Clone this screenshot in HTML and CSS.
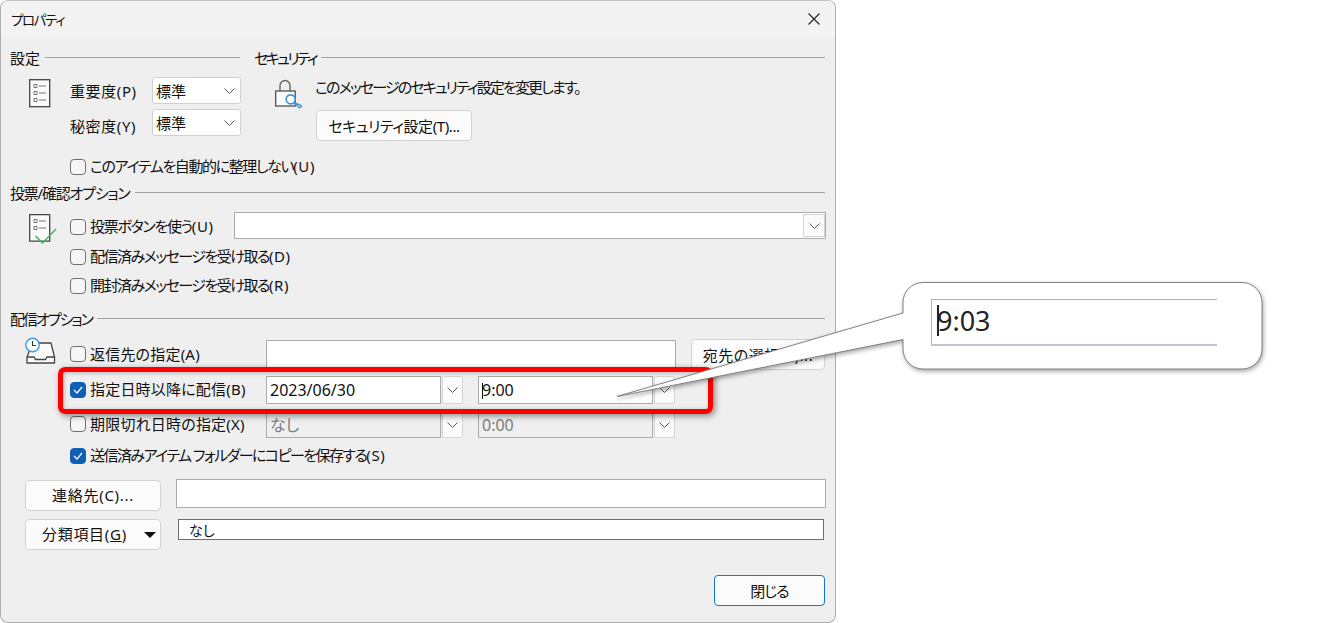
FILE: index.html
```html
<!DOCTYPE html>
<html lang="ja">
<head>
<meta charset="utf-8">
<title>プロパティ</title>
<link rel="stylesheet" href="styles.css">
</head>
<body>
<div class="dialog">
  <div class="titlebar">
    <span class="title-text">プロパティ</span>
    <svg class="close-x" width="12" height="12" viewBox="0 0 12 12"><path d="M.5.5l11 11M11.5.5l-11 11" stroke="#222" stroke-width="1.1" fill="none"/></svg>
  </div>
  <div class="content">
    <div class="top-grid">
      <section>
        <div class="sec-head"><span>設定</span><i class="rule"></i></div>
        <div class="pri">
          <svg class="icon-list" width="22" height="29" viewBox="0 0 22 29"><rect x=".7" y=".7" width="20" height="27" fill="#fafafa" stroke="#444" stroke-width="1.3"/><path d="M5 5.500h3v3H5zM5 12.500h3v3H5zM5 19.500h3v3H5z" fill="none" stroke="#777"/><path d="M10 7h7M10 14h7M10 21h7" stroke="#777"/></svg>
          <div class="pri-fields">
            <div class="pri-row"><span class="pri-label">重要度(P)</span><div class="select"><span>標準</span><svg width="11" height="6" viewBox="0 0 11 6"><path d="M.5.5l5 5 5-5" fill="none" stroke="#555"/></svg></div></div>
            <div class="pri-row second"><span class="pri-label low">秘密度(Y)</span><div class="select"><span>標準</span><svg width="11" height="6" viewBox="0 0 11 6"><path d="M.5.5l5 5 5-5" fill="none" stroke="#555"/></svg></div></div>
          </div>
        </div>
      </section>
      <section>
        <div class="sec-head"><span class="tight-security">セキュリティ</span><i class="rule"></i></div>
        <div class="sec-body">
          <svg class="icon-lock" width="28" height="30" viewBox="0 0 28 30"><path d="M5 12V6.500a5 5 0 0 1 10 0V12" fill="none" stroke="#666" stroke-width="1.400"/><rect x=".7" y="12" width="19.500" height="15" fill="#fafafa" stroke="#444" stroke-width="1.200"/><path d="M19 23.500l5.500 5.500 2-1.500-1-1.500-1 .5-1-1.500-1 .5-1.500-1.500z" fill="#fff" stroke="#3d92d0" stroke-width="1.300"/><circle cx="15.700" cy="20.300" r="4.500" fill="#fff" stroke="#3d92d0" stroke-width="1.700"/></svg>
          <div>
            <div class="sec-text">このメッセージのセキュリティ設定を変更します。</div>
            <div class="btn btn-security"><span>セキュリティ設定(T)...</span></div>
          </div>
        </div>
      </section>
    </div>

    <label class="check-row row-keep"><i class="check"></i><span class="tight-keep">このアイテムを自動的に整理しない<span class="key">(U)</span></span></label>

    <div class="sec-head head-vote"><span class="tight-vote">投票/確認オプション</span><i class="rule"></i></div>
    <div class="group">
      <svg class="icon-vote" width="28" height="31" viewBox="0 0 28 31"><path d="M.7.7h20v26.500H.7z" fill="#fafafa" stroke="#444" stroke-width="1.300"/><path d="M5 5.500h3v3H5zM5 12.500h3v3H5z" fill="none" stroke="#777"/><path d="M10 7h7M10 14h7" stroke="#777"/><path d="M6.500 22l7 7 13.500-14" fill="none" stroke="#4caf6a" stroke-width="1.500"/></svg>
      <div class="group-rows">
        <div class="vote-row">
          <label class="check-row vote-check"><i class="check"></i><span class="tight-vote-label">投票ボタンを使う<span class="key">(U)</span></span></label>
          <div class="input vote-input"><div class="mini-drop"><svg width="11" height="6" viewBox="0 0 11 6"><path d="M.5.5l5 5 5-5" fill="none" stroke="#555"/></svg></div></div>
        </div>
        <label class="check-row row-delivered"><i class="check"></i><span class="tight-receipt">配信済みメッセージを受け取る<span class="key">(D)</span></span></label>
        <label class="check-row row-read"><i class="check"></i><span class="tight-receipt">開封済みメッセージを受け取る<span class="key">(R)</span></span></label>
      </div>
    </div>

    <div class="sec-head head-delivery"><span class="tight-delivery">配信オプション</span><i class="rule"></i></div>
    <div class="group">
      <svg class="icon-tray" width="32" height="30" viewBox="0 0 32 30"><path d="M10 6h16l3.500 14v6H2v-6L7 7" fill="#fafafa" stroke="#444" stroke-width="1.300" stroke-linejoin="round"/><path d="M2 20h7l1.500 2.500h10L22 20h7.500" fill="none" stroke="#444" stroke-width="1.300"/><circle cx="7.500" cy="8" r="6.700" fill="#fff" stroke="#3d9ad8" stroke-width="1.400"/><path d="M7.500 4v4.500h3.500" fill="none" stroke="#333" stroke-width="1.100"/></svg>
      <div class="group-rows">
        <div class="opt-row opt-reply">
          <label class="check-row opt-check"><i class="check"></i><span class="wide-1">返信先の指定(A)</span></label>
          <div class="input reply-input"></div>
          <div class="btn btn-recipient"><span class="wide-2">宛先の選択(R)...</span></div>
        </div>
        <div class="opt-row opt-defer">
          <label class="check-row opt-check"><i class="check on"><svg width="10" height="8" viewBox="0 0 10 8"><path d="M1 4l3 3 5-6" fill="none" stroke="#fff" stroke-width="1.200"/></svg></i><span class="wide-1">指定日時以降に配信(B)</span></label>
          <div class="input date-input"><span class="value">2023/06/30</span></div>
          <div class="arrow"><svg width="11" height="6" viewBox="0 0 11 6"><path d="M.5.5l5 5 5-5" fill="none" stroke="#555"/></svg></div>
          <div class="input date-input time-input"><i class="caret"></i><span class="value">9:00</span></div>
          <div class="arrow"><svg width="11" height="6" viewBox="0 0 11 6"><path d="M.5.5l5 5 5-5" fill="none" stroke="#555"/></svg></div>
        </div>
        <div class="opt-row opt-expire">
          <label class="check-row opt-check"><i class="check"></i><span class="wide-1">期限切れ日時の指定(X)</span></label>
          <div class="input date-input off"><span class="value">なし</span></div>
          <div class="arrow"><svg width="11" height="6" viewBox="0 0 11 6"><path d="M.5.5l5 5 5-5" fill="none" stroke="#555"/></svg></div>
          <div class="input date-input time-input off"><span class="value">0:00</span></div>
          <div class="arrow"><svg width="11" height="6" viewBox="0 0 11 6"><path d="M.5.5l5 5 5-5" fill="none" stroke="#555"/></svg></div>
        </div>
        <label class="check-row row-sent"><i class="check on"><svg width="10" height="8" viewBox="0 0 10 8"><path d="M1 4l3 3 5-6" fill="none" stroke="#fff" stroke-width="1.200"/></svg></i><span class="tight-sent">送信済みアイテム フォルダーにコピーを保存する<span class="key">(S)</span></span></label>
      </div>
    </div>

    <div class="foot-row contacts">
      <div class="btn btn-foot"><span class="wide-3">連絡先(C)...</span></div>
      <div class="input contact-input"></div>
    </div>
    <div class="foot-row categories">
      <div class="btn btn-foot btn-cat"><span class="wide-3">分類項目(<u>G</u>)</span><i class="tri"></i></div>
      <div class="cat-field">なし</div>
    </div>
    <div class="btn btn-close"><span>閉じる</span></div>
  </div>
</div>

<div class="highlight"></div>
<div class="callout">
  <svg class="callout-shape" width="660" height="125" viewBox="610 275 660 125"><path d="M923 282.500H1242a20 20 0 0 1 20 20V349a20 20 0 0 1-20 20H923a20 20 0 0 1-20-20V339.500L617 396.500 903 313V302.500a20 20 0 0 1 20-20z" fill="#fff" stroke="#808080"/></svg>
  <div class="zoom-field"><i class="zoom-caret"></i><span>9:03</span></div>
</div>
</body>
</html>
```
FILE: styles.css
```css
* { box-sizing: border-box; }
html, body { margin: 0; height: 100%; background: #fff; overflow: hidden; }
body {
  position: relative;
  font-family: "Noto Sans", "Noto Sans CJK JP", sans-serif;
  font-size: 15px;
  line-height: 20px;
  color: #111;
  font-feature-settings: "palt";
}
.dialog {
  width: 836px;
  height: 623px;
  background: #efefef;
  border: 1px solid #adadad;
  border-top-color: #c4c4c4;
  border-radius: 8px;
  overflow: hidden;
  display: flex;
  flex-direction: column;
}
.titlebar {
  height: 37px;
  flex: none;
  background: #f3f3f3;
  display: flex;
  align-items: center;
  justify-content: space-between;
  padding: 0 15px 0 10px;
  font-size: 13.5px;
}
.title-text { letter-spacing: -1.4px; }
.close-x { display: block; margin-top: -1px; }
.content { padding: 0 10px; display: flex; flex-direction: column; }

.tight-security { letter-spacing: -2.6px; }
.tight-keep { letter-spacing: -1.4px; }
.tight-receipt { letter-spacing: -1.5px; }
.tight-vote { letter-spacing: -1.2px; }
.tight-vote-label { letter-spacing: -1.3px; }
.tight-delivery { letter-spacing: -2px; }
.tight-sent { letter-spacing: -1.55px; }
.key { letter-spacing: .6px; }
.wide-1 { letter-spacing: .2px; }
.wide-2 { letter-spacing: .5px; }
.wide-3 { letter-spacing: .7px; }

.top-grid { display: grid; grid-template-columns: 229px 570px; column-gap: 15px; margin-top: 10px; }
.sec-head { height: 20px; display: flex; align-items: center; gap: 5px; white-space: nowrap; }
.sec-head span { margin-left: -1px; }
.rule { flex: 1; height: 1px; background: #a3a3a3; margin-top: -1px; }
.head-vote { margin-top: 6px; }
.head-delivery { margin-top: 13px; }

.group { display: flex; }
.group-rows { flex: 1; min-width: 0; display: flex; flex-direction: column; }

.pri { display: flex; margin-top: 9px; }
.icon-list { margin: 2px 0 0 18px; flex: none; }
.pri-fields { margin-left: 19px; flex: 1; }
.pri-row { display: flex; align-items: center; height: 27px; }
.pri-row.second { margin-top: 5px; }
.pri-label { width: 82px; flex: none; letter-spacing: .6px; }
.pri-label.low { padding-top: 7px; }
.select {
  width: 89px;
  height: 27px;
  background: #fff;
  border: 1px solid #d0d0d0;
  border-radius: 3px;
  display: flex;
  align-items: center;
  justify-content: space-between;
  padding: 0 5px 0 3px;
}

.sec-body { display: flex; margin-left: 20px; }
.icon-lock { flex: none; margin: 11px 12px 0 0; }
.sec-text { margin-top: 9px; white-space: nowrap; letter-spacing: -1.87px; }
.btn {
  background: #fbfbfb;
  border: 1px solid #d2d2d2;
  border-radius: 4px;
  display: flex;
  align-items: center;
  justify-content: center;
  white-space: nowrap;
}
.btn-security { width: 156px; height: 31px; margin: 13px 0 0 1px; letter-spacing: -.4px; }

.check-row { display: flex; align-items: center; gap: 4px; white-space: nowrap; height: 20px; }
.check-row > span { margin-top: -2px; }
.check {
  width: 16px;
  height: 16px;
  flex: none;
  border: 1px solid #707070;
  border-radius: 4px;
  background: #f6f6f6;
  display: flex;
  align-items: center;
  justify-content: center;
  margin-top: -1px;
}
.check.on { background: #0f5fb4; border-color: #0f5fb4; }
.row-keep { margin: 16px 0 0 59px; }

.icon-vote { flex: none; margin: 11px 13px 0 18px; }
.vote-row { display: flex; align-items: center; height: 27px; margin: 9px -1px 0 0; }
.vote-check { width: 164px; flex: none; padding-top: 3px; }
.input { background: #fff; border: 1px solid #ababab; }
.vote-input { flex: 1; height: 27px; display: flex; justify-content: flex-end; }
.mini-drop {
  width: 22px;
  height: 23px;
  margin: 1px 0;
  background: #fbfbfb;
  border: 1px solid #d4d4d4;
  display: flex;
  align-items: center;
  justify-content: center;
}
.row-delivered { margin-top: 8px; }
.row-read { margin-top: 9px; }

.icon-tray { flex: none; margin: 8px 13px 0 14px; }
.opt-row { display: flex; }
.opt-check { width: 196px; flex: none; align-self: center; }
.opt-reply { margin-top: 11px; height: 29px; }
.reply-input { width: 410px; height: 29px; }
.btn-recipient { width: 134px; height: 31px; margin: -1px 0 0 15px; }
.opt-defer { margin-top: 7px; height: 28px; }
.opt-expire { margin-top: 7px; height: 27px; }
.date-input {
  width: 175px;
  height: 100%;
  display: flex;
  align-items: center;
  padding-left: 3px;
  position: relative;
}
.time-input { margin-left: 15px; }
.value { font-size: 16px; }
.off { background: #efefef; color: #7b7b7b; }
.arrow {
  width: 21px;
  height: 100%;
  margin-left: 1px;
  background: #fbfbfb;
  border: 1px solid #d4d4d4;
  border-radius: 2px;
  display: flex;
  align-items: center;
  justify-content: center;
}
.caret { width: 1px; height: 16px; background: #111; position: absolute; left: 3px; top: 6px; }
.row-sent { margin-top: 8px; }

.foot-row { display: flex; margin-left: 14px; }
.contacts { margin-top: 14px; height: 32px; }
.contact-input { width: 650px; height: 29px; margin: -1px -1px 0 15px; }
.categories { margin-top: 7px; height: 31px; }
.btn-foot { width: 136px; height: 31px; }
.btn-foot span { margin-top: -2px; }
.btn-cat { justify-content: flex-start; padding-left: 16px; gap: 17px; }
.tri { width: 0; height: 0; border-left: 6px solid transparent; border-right: 6px solid transparent; border-top: 6px solid #111; }
.cat-field {
  width: 646px;
  height: 21px;
  margin-left: 17px;
  background: #fff;
  border: 1px solid #6d6d6d;
  padding-left: 10px;
  line-height: 21px;
  font-size: 14px;
}
.btn-close { width: 111px; height: 31px; margin: 25px 0 0 auto; border-color: #0f78d4; letter-spacing: -1px; }

.highlight {
  position: absolute;
  left: 58px;
  top: 367px;
  width: 655px;
  height: 47px;
  border: 5px solid #fe0000;
  border-radius: 7px;
  box-shadow: 2px 2px 6px rgba(0, 0, 0, .45), inset 1px 1px 4px rgba(0, 0, 0, .25);
}
.callout { position: absolute; left: 610px; top: 275px; width: 660px; height: 125px; }
.callout-shape { display: block; filter: drop-shadow(1px 2px 2px rgba(0, 0, 0, .35)); }
.zoom-field {
  position: absolute;
  left: 321px;
  top: 24px;
  width: 286px;
  height: 47px;
  border: 1px solid #b2b2b2;
  border-right: 0;
  border-bottom: 2px solid #c4c4ce;
  padding-left: 5px;
  font-size: 27px;
  line-height: 42px;
  color: #222;
}
.zoom-caret { position: absolute; left: 5px; top: 5px; width: 2px; height: 31px; background: #222; }
```
